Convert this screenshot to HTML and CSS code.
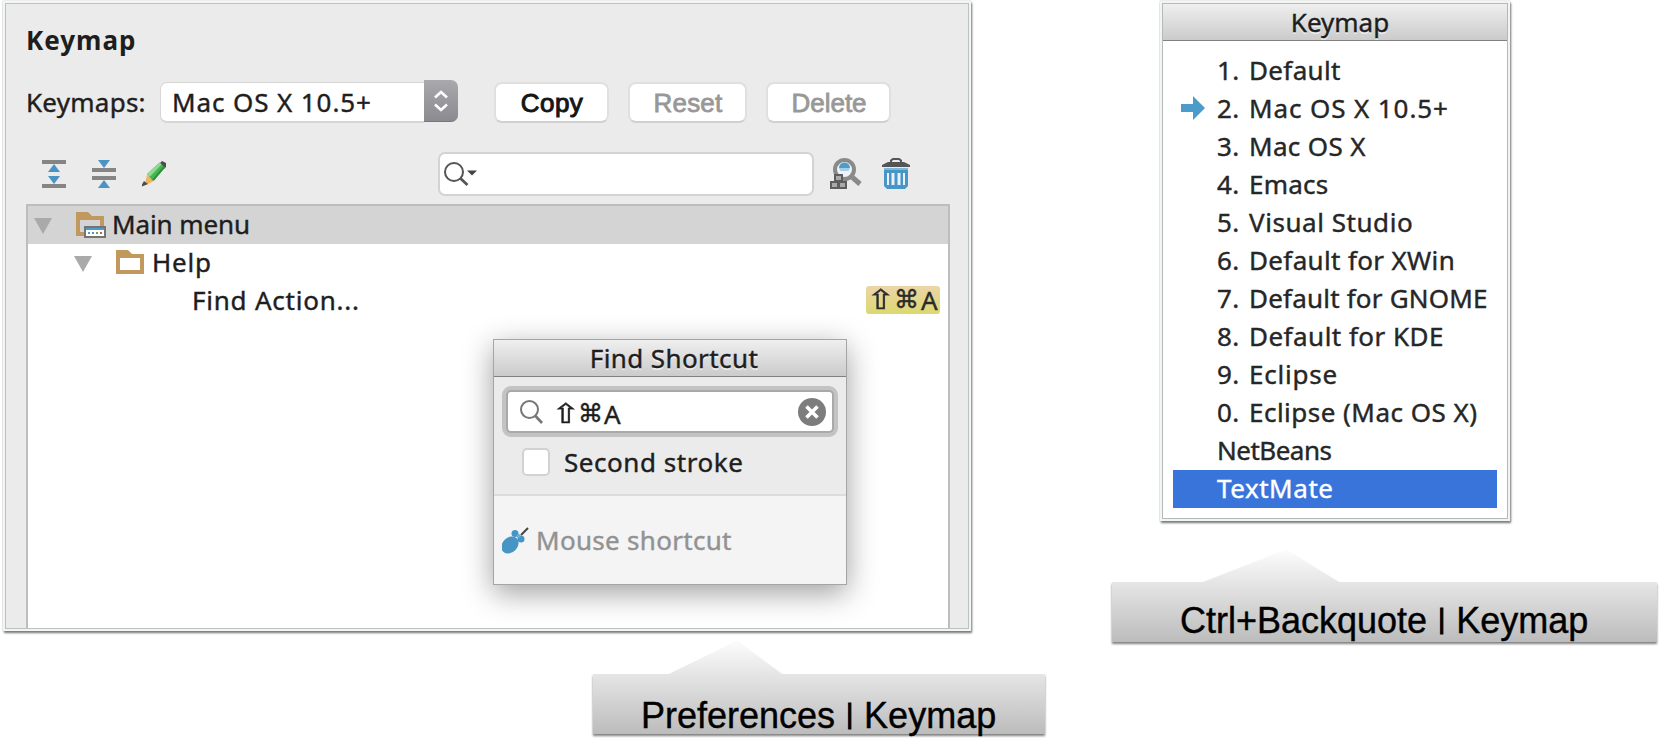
FILE: index.html
```html
<!DOCTYPE html>
<html lang="en">
<head>
<meta charset="utf-8">
<title>Keymap</title>
<link rel="stylesheet" href="styles.css">
</head>
<body>
<main class="page">
  <section class="column column-prefs">
    <div class="window prefs">
      <h1 class="title">Keymap</h1>
      <div class="scheme">
        <label class="scheme-label">Keymaps:</label>
        <div class="combo">
          <span class="combo-text wide">Mac OS X 10.5+</span>
          <span class="combo-knob"><svg width="16" height="24" viewBox="0 0 16 24"><path d="M2 8.500l6-5.500 6 5.500M2 15.500l6 5.500 6-5.500" fill="none" stroke="#fff" stroke-width="2.600"/></svg></span>
        </div>
        <button class="btn btn-copy">Copy</button>
        <button class="btn btn-reset">Reset</button>
        <button class="btn btn-delete">Delete</button>
      </div>
      <div class="toolbar">
        <svg class="tool" width="24" height="28" viewBox="0 0 24 28"><path fill="#858585" d="M0 0h24v4H0zM0 24h24v4H0z"/><path fill="#4b92c5" d="M12 4l6 8H6zM6 16h12l-6 8z"/></svg>
        <svg class="tool" width="24" height="28" viewBox="0 0 24 28"><path fill="#858585" d="M0 8h24v4H0zM0 16h24v4H0z"/><path fill="#4b92c5" d="M6 0h12l-6 8zM12 20l6 8H6z"/></svg>
        <svg class="tool" width="26" height="26" viewBox="0 0 26 26"><path fill="#f0b563" d="M5 14l7 6-8 4-1-1z"/><path fill="#4d4d4d" d="M2 20l4 3-6 2.500v-2zM18 2l2-2 4 2v4l-2 2z"/><path fill="#47b553" d="M17.500 1.500l5.500 5L12 19.500l-2-.5-5-6z"/><path fill="#8edc94" d="M17.500 1.500l2 2L8 15.500 5 13z"/><path fill="#2d8f3a" d="M21.500 5l1.500 1.500L12 19.500l-2-.5z"/></svg>
        <div class="search">
          <svg width="36" height="26" viewBox="0 0 36 26"><circle cx="10" cy="11" r="9" fill="none" stroke="#555" stroke-width="2"/><path d="M16 17l7.500 7" stroke="#555" stroke-width="2.800"/><path fill="#444" d="M23 9.500h10l-5 5z"/></svg>
        </div>
        <svg class="tool-find" width="33" height="33" viewBox="0 0 33 33"><circle cx="14.500" cy="12.500" r="9.500" fill="#edf3f7" stroke="#8a8a8a" stroke-width="4"/><path fill="#4b9bcb" d="M9 11a5.500 5.500 0 0 1 11 0z"/><path fill="#a6cde3" d="M9 11h11l-1.500 3h-8z"/><path d="M22 20l8 7" stroke="#8a8a8a" stroke-width="5"/><g fill="#aaa" stroke="#5e5e5e" stroke-width="2"><path d="M5 18h7v6H5zM1 25h7v6H1zM9 25h7v6H9z"/></g></svg>
        <svg class="tool-trash" width="28" height="32" viewBox="0 0 28 32"><path fill="none" stroke="#555" stroke-width="2" d="M9 5V2.500L11 1h6l2 1.500V5"/><path fill="#555" d="M6 4h16l6 3v2H0V7z"/><path fill="#4796c5" d="M2 10h24v18l-3 3H5l-3-3z"/><path fill="#7db8dc" d="M2 10h24v2H2z"/><path fill="#e8f2f8" d="M5 15h2v12H5zM9.500 15h3v12h-3zM15.500 15h3v12h-3zM21 15h2v12h-2z"/></svg>
      </div>
      <div class="tree">
        <div class="row row-root">
          <svg class="twist" width="18" height="16" viewBox="0 0 18 16"><path fill="#aaa" d="M0 0h18L9 16z"/></svg>
          <svg class="folder" width="30" height="26" viewBox="0 0 30 26"><path fill="#c1995f" d="M0 0h12l4 4h12v20H0z"/><path fill="#d4d4d4" d="M4 8h20v12H4z"/><path fill="#747474" d="M8 14h22v12H8z"/><path fill="#fff" d="M10 17h18v7H10z"/><path fill="#4d9bcb" d="M10 16h18v2H10zM12 20h2v2h-2zM16 20h2v2h-2z"/><path fill="#53ad5a" d="M20 20h2v2h-2z"/><path fill="#d9534a" d="M24 20h2v2h-2z"/></svg>
          <span class="tight">Main menu</span>
        </div>
        <div class="row row-help">
          <svg class="twist" width="18" height="16" viewBox="0 0 18 16"><path fill="#aaa" d="M0 0h18L9 16z"/></svg>
          <svg class="folder" width="30" height="26" viewBox="0 0 30 26"><path fill="#c1995f" d="M0 0h12l4 4h12v20H0z"/><path fill="#fff" d="M4 8h20v12H4z"/></svg>
          <span class="loose">Help</span>
        </div>
        <div class="row row-action">
          <span class="loose">Find Action...</span>
          <kbd class="badge"><span class="key key-shift">⇧</span><span class="key key-cmd">⌘</span>A</kbd>
        </div>
        <div class="popup">
          <div class="bar popup-bar">Find Shortcut</div>
          <div class="popup-body">
            <div class="field">
              <svg width="23" height="24" viewBox="0 0 23 24"><circle cx="9.500" cy="9.500" r="8.500" fill="none" stroke="#777" stroke-width="2"/><path d="M15.500 16l6.500 7" stroke="#777" stroke-width="2.600"/></svg>
              <span class="field-text"><span class="key key-shift">⇧</span><span class="key key-cmd">⌘</span>A</span>
              <svg class="clear" width="28" height="28" viewBox="0 0 28 28"><circle cx="14" cy="14" r="14" fill="#7d7d7d"/><path d="M8.500 8.500l11 11M19.500 8.500l-11 11" stroke="#fff" stroke-width="3.600"/></svg>
            </div>
            <label class="check"><span class="box"></span><span class="roomy">Second stroke</span></label>
          </div>
          <div class="popup-foot">
            <svg width="27" height="27" viewBox="0 0 27 27"><path d="M19 8l7-7" stroke="#444" stroke-width="2"/><ellipse cx="8" cy="18" rx="9.500" ry="7.500" transform="rotate(-45 8 18)" fill="#4695c4"/><circle cx="13" cy="6.500" r="3.500" fill="#4695c4"/><circle cx="19" cy="12" r="3.500" fill="#4695c4"/><circle cx="16.500" cy="9" r="2" fill="#69aed6"/></svg>
            <span>Mouse shortcut</span>
          </div>
        </div>
      </div>
    </div>
    <div class="callout callout-prefs">
      <svg class="callout-shape" width="452" height="93" viewBox="0 0 452 93"><defs><linearGradient id="g1" x1="0" y1="0" x2="0" y2="1"><stop offset="0" stop-color="#fcfcfc"/><stop offset="1" stop-color="#bcbcbc"/></linearGradient></defs><path fill="url(#g1)" d="M0 33h76l68-33 45 33h263v60H0z"/></svg>
      <span class="callout-text">Preferences <span class="pipe">|</span> Keymap</span>
    </div>
  </section>
  <section class="column column-popup">
    <div class="window chooser">
      <div class="bar chooser-bar">Keymap</div>
      <ul class="list">
        <li><i>1.</i><span>Default</span></li>
        <li><svg class="arrow" width="24" height="24" viewBox="0 0 24 24"><path fill="#4b9bcb" d="M0 8h12V0l12 12-12 12v-8H0z"/></svg><i>2.</i><span class="wide">Mac OS X 10.5+</span></li>
        <li><i>3.</i><span>Mac OS X</span></li>
        <li><i>4.</i><span class="snug">Emacs</span></li>
        <li><i>5.</i><span class="roomy">Visual Studio</span></li>
        <li><i>6.</i><span>Default for XWin</span></li>
        <li><i>7.</i><span class="snug">Default for GNOME</span></li>
        <li><i>8.</i><span class="even">Default for KDE</span></li>
        <li><i>9.</i><span class="loose">Eclipse</span></li>
        <li><i>0.</i><span class="even">Eclipse (Mac OS X)</span></li>
        <li><span class="packed">NetBeans</span></li>
        <li class="selected"><span class="roomy">TextMate</span></li>
      </ul>
    </div>
    <div class="callout callout-keys">
      <svg class="callout-shape" width="545" height="92" viewBox="0 0 545 92"><defs><linearGradient id="g2" x1="0" y1="0" x2="0" y2="1"><stop offset="0" stop-color="#fcfcfc"/><stop offset="1" stop-color="#bcbcbc"/></linearGradient></defs><path fill="url(#g2)" d="M0 32h91l83-32 53 32h318v60H0z"/></svg>
      <span class="callout-text">Ctrl+Backquote <span class="pipe">|</span> Keymap</span>
    </div>
  </section>
</main>
</body>
</html>
```
FILE: styles.css
```css
* { box-sizing: border-box; }
body {
  margin: 0;
  background: #fff;
  color: #1e1e1e;
  font: 26px/38px "Noto Sans", "DejaVu Sans", sans-serif;
  letter-spacing: .35px;
  -webkit-text-stroke: .4px;
}
svg { display: block; flex: none; }
.page { display: flex; width: 1664px; height: 741px; overflow: hidden; }
.column { display: flex; flex-direction: column; flex: none; padding-top: 1px; }
.column-prefs { width: 1112px; padding-left: 3px; }
.packed { letter-spacing: -.5px; }
.tight { letter-spacing: -.1px; }
.snug { letter-spacing: .2px; }
.even { letter-spacing: .48px; }
.roomy { letter-spacing: .55px; }
.loose { letter-spacing: .78px; }
.wide { letter-spacing: .9px; }
.window {
  border: 3px solid #f1f5f4;
  box-shadow: 0 0 1px #999, 1px 2px 2px rgba(0, 0, 0, .55);
}
.prefs { width: 968px; height: 630px; background: #ebebeb; padding: 17px 18px 0 20px; outline: 1px solid #bcc2c0; outline-offset: -3px; }
.title { margin: 0; height: 38px; font-size: 26px; line-height: 38px; font-weight: 700; white-space: nowrap; letter-spacing: 1px; -webkit-text-stroke: 0; }
.scheme { display: flex; height: 43px; margin-top: 21px; align-items: flex-start; white-space: nowrap; }
.scheme-label { width: 134px; line-height: 44px; letter-spacing: .25px; }
.combo { display: flex; width: 298px; height: 43px; margin-right: 36px; padding-top: 2px; }
.combo-text { flex: 1; height: 41px; padding-left: 11px; line-height: 38px; background: #fff; border: 1px solid #d6d6d6; border-bottom-width: 2px; border-right: 0; border-radius: 7px 0 0 7px; }
.combo-knob { display: flex; width: 34px; height: 42px; margin-top: -2px; align-items: center; justify-content: center; border-radius: 0 7px 7px 0; background: linear-gradient(#a9a9ac, #8b8b90); border-bottom: 1px solid #77777b; }
.btn { height: 41px; margin: 2px 19px 0 0; padding: 1px 0 0 1px; background: #fff; border: 2px solid #e0e0e0; border-bottom-color: #d0d0d0; border-radius: 8px; font: 26px/36px "Liberation Sans", Arial, sans-serif; color: #989898; -webkit-text-stroke: .8px; }
.btn-copy { width: 115px; color: #151515; letter-spacing: .5px; -webkit-text-stroke: 1px; }
.btn-reset { width: 119px; letter-spacing: .2px; }
.btn-delete { width: 125px; margin-right: 0; letter-spacing: 0; }
.toolbar { display: flex; height: 61px; margin-top: 20px; align-items: center; padding-left: 16px; padding-bottom: 0; }
.tool { margin-right: 26px; }
.search { width: 376px; height: 44px; margin: 0 16px 0 244px; padding: 7px 4px; background: #fff; border: 2px solid #d3d3d3; border-radius: 7px; }
.tool-find { margin-right: 19px; }
.tree { position: relative; height: 424px; background: #fff; border: 2px solid #bdbdbd; border-bottom: 0; }
.row { display: flex; height: 38px; line-height: 36px; white-space: nowrap; }
.row-root { background: #d4d4d4; padding-left: 6px; }
.row-help { padding-left: 46px; }
.row-action { padding: 0 8px 0 164px; justify-content: space-between; }
.twist { margin: 12px 24px 0 0; }
.folder { margin: 6px 6px 0 0; }
.badge { display: flex; align-items: center; width: 74px; height: 28px; margin-top: 4px; padding-left: 4px; border-radius: 3px; background: linear-gradient(#ecd5a8, #dcd86f); font: 26px/28px "Noto Sans", sans-serif; letter-spacing: 0; color: #2b2b2b; }
.key { flex: none; font-family: "DejaVu Sans", sans-serif; text-align: center; }
.key-shift { display: flex; justify-content: center; width: 22px; font-size: 27px; transform: scaleX(1.3); }
.key-cmd { display: flex; justify-content: center; width: 29px; font-size: 25px; }
.popup { position: absolute; left: 465px; top: 133px; width: 354px; height: 246px; border: 1px solid #a5a5a5; background: #ebebeb; box-shadow: 0 8px 28px rgba(0, 0, 0, .38); white-space: nowrap; }
.bar { text-align: center; background: linear-gradient(#efefef, #cbcbcb); border-bottom: 1px solid #808080; text-shadow: 0 2px 0 rgba(255, 255, 255, .6); }
.popup-bar { height: 37px; line-height: 36px; padding-left: 8px; letter-spacing: .4px; }
.popup-body { height: 117px; padding: 13px 12px 0; }
.field { display: flex; height: 43px; align-items: center; padding: 0 6px 0 12px; background: #fff; border: 2px solid #a9a9a9; border-radius: 5px; box-shadow: 0 0 0 4px #c3c3c3; }
.field-text { display: flex; align-items: center; flex: 1; height: 38px; padding: 4px 0 0 12px; letter-spacing: 0; }
.field-text .key-cmd { width: 27px; }
.check { display: flex; align-items: center; height: 38px; margin-top: 10px; padding-left: 15px; }
.box { width: 28px; height: 28px; margin: 0 14px 0 1px; background: #fff; border: 2px solid #d2d2d2; border-radius: 5px; }
.popup-foot { display: flex; align-items: center; height: 90px; padding: 0 8px; background: #f4f4f4; border-top: 2px solid #dcdcdc; color: #929292; letter-spacing: .3px; }
.popup-foot svg { margin-right: 7px; }
.callout { position: relative; flex: none; }
.callout-shape { filter: drop-shadow(0 2px 1px rgba(0, 0, 0, .5)); }
.callout-text { position: absolute; font: 36px/40px "Liberation Sans", Arial, sans-serif; letter-spacing: 0; color: #000; white-space: nowrap; }
.callout-prefs { width: 452px; margin: 10px 0 0 590px; }
.callout-prefs .callout-text { left: 48px; top: 55px; }
.callout-keys { width: 545px; margin: 29px 0 0 0; }
.callout-keys .callout-text { left: 68px; top: 51px; }
.pipe { display: inline-block; width: 9px; text-align: center; font-size: 28px; line-height: 28px; vertical-align: 5px; -webkit-text-stroke: 1px; }
.column-popup { width: 552px; }
.chooser { width: 350px; height: 520px; margin-left: 48px; background: #fff; outline: 1px solid #b4bab8; outline-offset: -3px; }
.chooser-bar { height: 37px; line-height: 37px; padding-left: 10px; letter-spacing: 0; }
.list { list-style: none; margin: 0; padding: 11px 10px 0; color: #262626; }
.list li { position: relative; display: flex; height: 38px; line-height: 36px; padding-left: 44px; white-space: nowrap; }
.list i { width: 32px; font-style: normal; }
.list .selected { background: #3974da; color: #fff; }
.arrow { position: absolute; left: 8px; top: 6px; }
```
